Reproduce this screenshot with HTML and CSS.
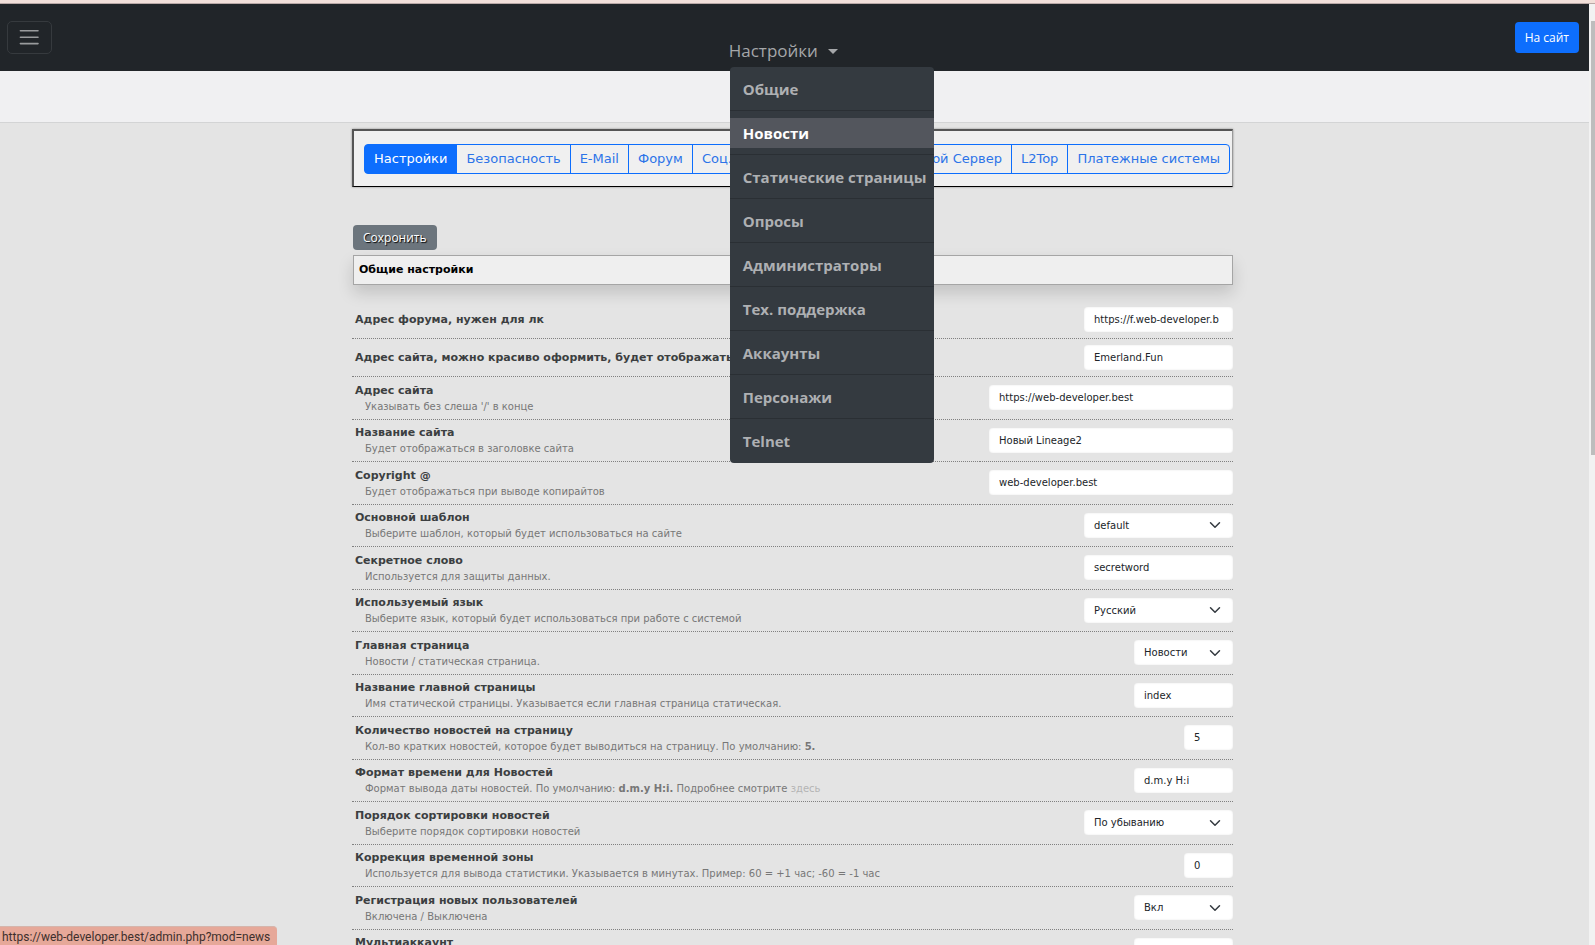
FILE: index.html
```html
<!DOCTYPE html>
<html lang="ru">
<head>
<meta charset="utf-8">
<title>Настройки</title>
<link rel="stylesheet" href="styles.css">
</head>
<body>
<div class="strip"></div>
<div class="window">
<div class="page">
  <header class="navbar">
    <button class="toggler" type="button" aria-label="Меню">
      <svg viewBox="0 0 30 30" width="24" height="24" fill="none" stroke="currentColor" stroke-width="2" stroke-linecap="round"><path d="M3 6h22M3 14h22M3 22h22"/></svg>
    </button>
    <nav class="dropdown">
      <button class="dropdown-toggle" type="button" aria-expanded="true">Настройки</button>
      <ul class="menu">
        <li><a href="#">Общие</a></li>
        <li><a class="hover" href="#">Новости</a></li>
        <li><a href="#">Статические страницы</a></li>
        <li><a href="#">Опросы</a></li>
        <li><a href="#">Администраторы</a></li>
        <li><a href="#">Тех. поддержка</a></li>
        <li><a href="#">Аккаунты</a></li>
        <li><a href="#">Персонажи</a></li>
        <li><a href="#">Telnet</a></li>
      </ul>
    </nav>
    <a class="site-link" href="#">На сайт</a>
  </header>
  <div class="subbar"></div>
  <main class="main">
    <div class="container">
      <div class="tabs-box">
        <div class="tabs">
          <button class="active" type="button">Настройки</button>
          <button type="button">Безопасность</button>
          <button type="button">E-Mail</button>
          <button type="button">Форум</button>
          <button class="wide" type="button">Соц. сети</button>
          <button type="button">Игровой Сервер</button>
          <button type="button">L2Top</button>
          <button type="button">Платежные системы</button>
        </div>
      </div>
      <form>
        <button class="save" type="button">Сохронить</button>
        <h2 class="heading">Общие настройки</h2>
        <table class="settings">
          <tr class="short"><td><label for="f1">Адрес форума, нужен для лк</label></td><td><input class="w-m" id="f1" value="https://f.web-developer.b"></td></tr>
          <tr class="short"><td><label for="f2">Адрес сайта, можно красиво оформить, будет отображаться</label></td><td><input class="w-m" id="f2" value="Emerland.Fun"></td></tr>
          <tr><td><label for="f3">Адрес сайта</label><p>Указывать без слеша '/' в конце</p></td><td><input class="w-l" id="f3" value="https://web-developer.best"></td></tr>
          <tr><td><label for="f4">Название сайта</label><p>Будет отображаться в заголовке сайта</p></td><td><input class="w-l" id="f4" value="Новый Lineage2"></td></tr>
          <tr><td><label for="f5">Copyright @</label><p>Будет отображаться при выводе копирайтов</p></td><td><input class="w-l" id="f5" value="web-developer.best"></td></tr>
          <tr><td><label for="f6">Основной шаблон</label><p>Выберите шаблон, который будет использоваться на сайте</p></td><td><select class="w-m" id="f6"><option>default</option></select></td></tr>
          <tr><td><label for="f7">Секретное слово</label><p>Используется для защиты данных.</p></td><td><input class="w-m" id="f7" value="secretword"></td></tr>
          <tr><td><label for="f8">Используемый язык</label><p>Выберите язык, который будет использоваться при работе с системой</p></td><td><select class="w-m" id="f8"><option>Русский</option></select></td></tr>
          <tr><td><label for="f9">Главная страница</label><p>Новости / статическая страница.</p></td><td><select class="w-s" id="f9"><option>Новости</option></select></td></tr>
          <tr><td><label for="f10">Название главной страницы</label><p>Имя статической страницы. Указывается если главная страница статическая.</p></td><td><input class="w-s" id="f10" value="index"></td></tr>
          <tr><td><label for="f11">Количество новостей на страницу</label><p>Кол-во кратких новостей, которое будет выводиться на страницу. По умолчанию: <b>5.</b></p></td><td><input class="w-xs" id="f11" value="5"></td></tr>
          <tr><td><label for="f12">Формат времени для Новостей</label><p>Формат вывода даты новостей. По умолчанию: <b>d.m.y H:i.</b> Подробнее смотрите <a href="#">здесь</a></p></td><td><input class="w-s" id="f12" value="d.m.y H:i"></td></tr>
          <tr><td><label for="f13">Порядок сортировки новостей</label><p>Выберите порядок сортировки новостей</p></td><td><select class="w-m" id="f13"><option>По убыванию</option></select></td></tr>
          <tr><td><label for="f14">Коррекция временной зоны</label><p>Используется для вывода статистики. Указывается в минутах. Пример: 60 = +1 час; -60 = -1 час</p></td><td><input class="w-xs" id="f14" value="0"></td></tr>
          <tr><td><label for="f15">Регистрация новых пользователей</label><p>Включена / Выключена</p></td><td><select class="w-s" id="f15"><option>Вкл</option></select></td></tr>
          <tr><td><label for="f16">Мультиаккаунт</label><p>Включен / Выключен</p></td><td><select class="w-s" id="f16"><option>Вкл</option></select></td></tr>
        </table>
      </form>
    </div>
  </main>
</div>
<div class="scrollbar"><div class="thumb"></div></div>
</div>
<div class="status">https://web-developer.best/admin.php?mod=news</div>
</body>
</html>
```
FILE: styles.css
```css
* { box-sizing: border-box; }

body {
  margin: 0;
  height: 100vh;
  overflow: hidden;
  display: flex;
  flex-direction: column;
  background: #e4e4e4;
  font-family: "DejaVu Sans", Verdana, sans-serif;
}

.strip {
  flex: none;
  height: 4px;
  background: #f2e0da;
  border-bottom: 1px solid #b9a8a6;
}

.window { flex: 1; min-height: 0; display: flex; }
.page { flex: 1; min-width: 0; overflow: hidden; }

.scrollbar {
  width: 6px;
  padding: 17px 0 0 2px;
  background: #f2f2f2;
}
.thumb { height: 47%; background: #bdbdbd; }

.navbar {
  height: 67px;
  padding: 0 10px 0 7px;
  display: flex;
  justify-content: space-between;
  align-items: center;
  background: #212529;
  font-family: "Open Sans", "Noto Sans", sans-serif;
}

.toggler {
  width: 45px;
  height: 33px;
  padding: 0;
  display: flex;
  align-items: center;
  justify-content: center;
  background: none;
  border: 1px solid #363a3e;
  border-radius: 5px;
  color: #999b9d;
}

.dropdown {
  position: relative;
  z-index: 2;
  align-self: flex-end;
  padding-bottom: 3px;
}

.dropdown-toggle {
  display: flex;
  align-items: center;
  gap: 10px;
  padding: 0;
  border: 0;
  background: none;
  color: #a5a7a9;
  font: 17px/34px "Open Sans", "Noto Sans", sans-serif;
}
.dropdown-toggle::after {
  content: "";
  border: 5px solid transparent;
  border-top-color: currentColor;
  border-bottom: 0;
}

.menu {
  position: absolute;
  top: 100%;
  left: 1px;
  width: 204px;
  margin: -4px 0 0;
  padding: 7px 0;
  list-style: none;
  background: #343a40;
  border: 0;
  border-radius: 4px;
  white-space: nowrap;
}
.menu li + li {
  margin-top: 6px;
  padding-top: 7px;
  border-top: 1px solid #2a2f34;
}
.menu a {
  display: block;
  padding: 0 0 0 13px;
  color: #aeb0b3;
  font-size: 15px;
  font-weight: 700;
  line-height: 30px;
  text-decoration: none;
}
.menu a.hover { background: #53565d; color: #fff; }

.site-link {
  padding: 0 10px;
  border-radius: 4px;
  background: #0d6efd;
  color: #fff;
  font-size: 12px;
  line-height: 31px;
  text-decoration: none;
}

.subbar {
  height: 52px;
  background: #f0f0f2;
  border-bottom: 1px solid #d3d4d5;
}

.main { padding: 6px 4px 0 0; }
.container { max-width: 881px; margin: 0 auto; }

.tabs-box {
  padding: 13px 2px 12px 10px;
  background: #f0f0f0;
  border: 2px solid #555;
  border-right: 1px solid #999;
  border-bottom: 1px solid #000;
  box-shadow: 0 0 2px #888;
}
.tabs { display: flex; }
.tabs button {
  padding: 0 9px;
  margin-left: -1px;
  border: 1px solid #0d6efd;
  background: none;
  color: #2c74e8;
  font: 13px/28px "DejaVu Sans", Verdana, sans-serif;
  white-space: nowrap;
}
.tabs button:first-child { margin-left: 0; border-radius: 4px 0 0 4px; }
.tabs button:last-child { border-radius: 0 4px 4px 0; }
.tabs .active { background: #0d6efd; color: #fff; }
.tabs .wide { flex: 1; text-align: left; }

.save {
  display: block;
  margin: 38px 0 5px 1px;
  padding: 0 10px;
  border: 0;
  border-radius: 4px;
  background: #6c757d;
  color: #fff;
  font: 12px/25px "Open Sans", "Noto Sans", sans-serif;
  text-shadow: 1px 1px 1px #000;
}

.heading {
  margin: 0 0 15px 1px;
  padding: 0 5px;
  background: #efefef;
  border: 1px solid #a5a5a5;
  box-shadow: 0 8px 16px rgba(0, 0, 0, .15);
  color: #000;
  font-size: 11px;
  line-height: 28px;
}

.settings {
  width: 100%;
  border-collapse: collapse;
}
.settings tr { height: 43px; }
.settings tr:nth-child(even) { height: 42px; }
.settings tr.short { height: 38px; }
.settings td {
  padding: 2px 0 0 3px;
  border-bottom: 1px dotted #808080;
  color: #3c3f41;
  font-size: 11px;
  line-height: 16px;
}
.settings td:last-child { width: 253px; padding: 0; text-align: right; }
.settings tr:first-child td:last-child { padding-top: 2px; }
.settings label { display: block; font-weight: 700; white-space: nowrap; }
.settings p {
  margin: 0;
  padding-left: 10px;
  color: #777;
  font-size: 10px;
}
.settings p a { color: #b4b4b4; text-decoration: none; }

.settings input,
.settings select {
  height: 25px;
  padding: 0 10px;
  border: 0;
  border-radius: 4px;
  background-color: #fff;
  box-shadow: inset 0 0 2px #e4e4e4;
  color: #212529;
  font: 10px "DejaVu Sans", Verdana, sans-serif;
  vertical-align: middle;
}
.settings select {
  appearance: none;
  background-image: url("data:image/svg+xml,%3Csvg xmlns='http://www.w3.org/2000/svg' viewBox='0 0 16 16'%3E%3Cpath fill='none' stroke='%23343a40' stroke-width='2' stroke-linecap='round' stroke-linejoin='round' d='m2 5 6 6 6-6'/%3E%3C/svg%3E");
  background-repeat: no-repeat;
  background-position: right 12px center;
  background-size: 12px;
}
.w-l { width: 244px; }
.w-m { width: 149px; }
.w-s { width: 99px; }
.w-xs { width: 49px; }

.status {
  position: fixed;
  left: 0;
  bottom: 0;
  padding: 3px 7px 0 2px;
  background: #e6a899;
  border-top: 1px solid #d5b5ac;
  border-radius: 0 4px 0 0;
  color: #3d2f2c;
  font: 12px/15px Roboto, "Noto Sans", sans-serif;
}
```
